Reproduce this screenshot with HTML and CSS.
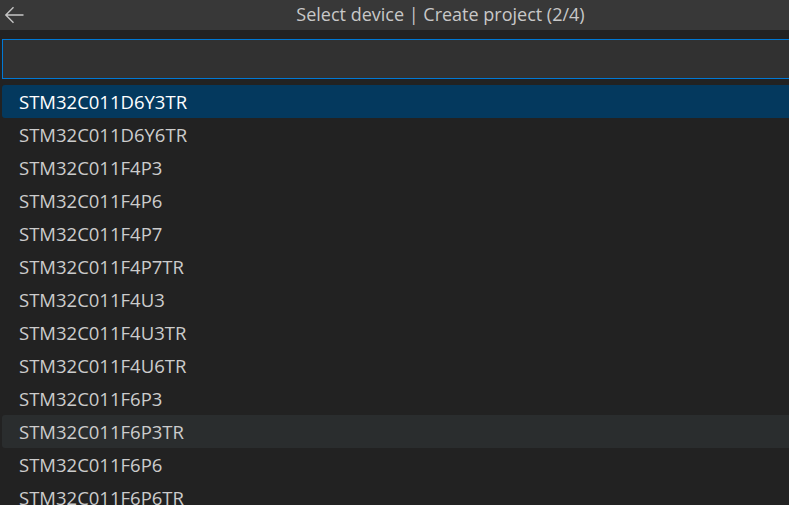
FILE: index.html
```html
<!DOCTYPE html>
<html lang="en">
<head>
    <meta charset="UTF-8">
    <title>Select device</title>
    <link rel="stylesheet" href="styles.css">
</head>
<body>
    <!-- BEGIN::titlebar -->
    <header class="titlebar">
        <button class="back-btn" aria-label="Back">
            <svg width="20" height="20" viewBox="0 0 20 20">
                <path d="M19.5 10H1.8M9.5 2.3L1.8 10L9.5 17.7" fill="none" stroke="#c5c5c5" stroke-width="1.4"/>
            </svg>
        </button>
        <h1>Select device | Create project (2/4)</h1>
    </header>
    <!-- END::titlebar -->
    <div class="search">
        <input type="text" class="search-input">
    </div>
    <!-- BEGIN::list -->
    <ul class="device-list">
        <li class="selected">STM32C011D6Y3TR</li>
        <li>STM32C011D6Y6TR</li>
        <li>STM32C011F4P3</li>
        <li>STM32C011F4P6</li>
        <li>STM32C011F4P7</li>
        <li>STM32C011F4P7TR</li>
        <li>STM32C011F4U3</li>
        <li>STM32C011F4U3TR</li>
        <li>STM32C011F4U6TR</li>
        <li>STM32C011F6P3</li>
        <li class="hover">STM32C011F6P3TR</li>
        <li>STM32C011F6P6</li>
        <li>STM32C011F6P6TR</li>
    </ul>
    <!-- END::list -->
</body>
</html>
```

FILE: styles.css
```css
*{
    margin: 0;
    padding: 0;
    box-sizing: border-box;
    font-family: 'Open Sans', sans-serif;
}

body{
    background: #222222;
    color: #cccccc;
    overflow: hidden;
    height: 505px;
}

.titlebar{
    height: 30px;
    background: #383838;
    display: flex;
    align-items: center;
    position: relative;
}

.back-btn{
    background: none;
    border: none;
    width: 28px;
    height: 30px;
    display: flex;
    align-items: center;
    padding-left: 4px;
}

/* title is centred on the full (wider) quick pick, so push it right */
.titlebar h1{
    position: absolute;
    left: 0;
    right: 0;
    top: 2px;
    padding-left: 92px;
    text-align: center;
    font-size: 18px;
    line-height: 24px;
    font-weight: 400;
    color: #c8c8c8;
    pointer-events: none;
    white-space: nowrap;
}

.search{
    padding: 9px 0 0 2px;
}

.search-input{
    display: block;
    width: 100%;
    height: 40px;
    background: #313131;
    border: 1px solid #0078d4;
    border-right: none;
    outline: none;
}

.device-list{
    list-style: none;
    padding: 6px 0 0 2px;
}

.device-list li{
    height: 33px;
    line-height: 33px;
    padding-left: 17px;
    font-size: 18.5px;
    color: #cccccc;
    border-radius: 3px 0 0 3px;
    white-space: nowrap;
}

.device-list li.selected{
    background: #04395e;
    color: #ffffff;
}

.device-list li.hover{
    background: #2a2d2e;
}
```
